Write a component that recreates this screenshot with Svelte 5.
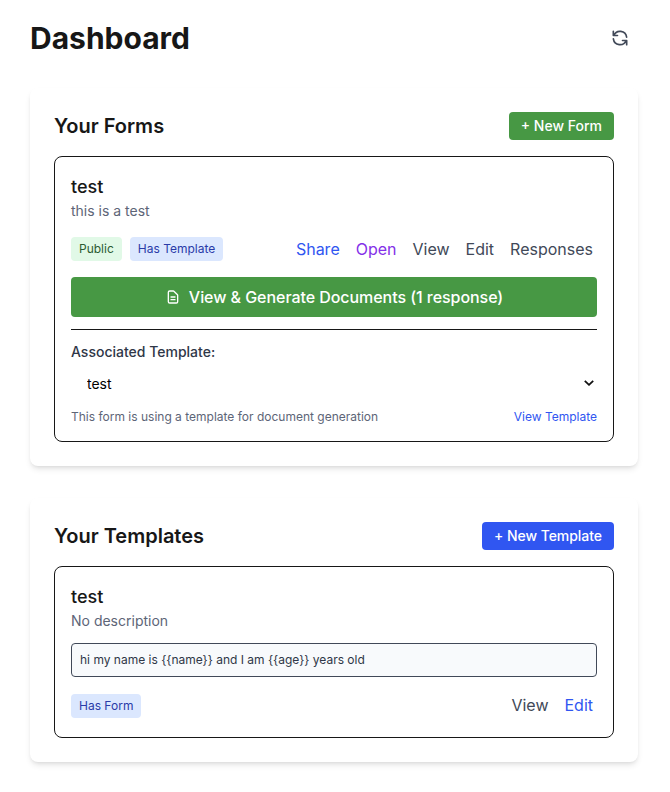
<script>
  const formActions = [
    { label: 'Share', tone: 'blue' },
    { label: 'Open', tone: 'purple' },
    { label: 'View', tone: 'gray' },
    { label: 'Edit', tone: 'gray' },
    { label: 'Responses', tone: 'gray' }
  ];
  const templateActions = [
    { label: 'View', tone: 'gray' },
    { label: 'Edit', tone: 'blue' }
  ];
  const preview = 'hi my name is {{name}} and I am {{age}} years old';
</script>

<main>
  <header>
    <h1>Dashboard</h1>
    <button class="refresh" aria-label="Refresh">
      <svg width="20" height="20" viewBox="0 0 24 24" fill="none" stroke="currentColor" stroke-width="2" stroke-linecap="round" stroke-linejoin="round">
        <path d="M4 4v5h.582m15.356 2A8.001 8.001 0 004.582 9m0 0H9m11 11v-5h-.581m0 0a8.003 8.003 0 01-15.357-2m15.357 2H15" />
      </svg>
    </button>
  </header>

  <section class="panel">
    <div class="panel-head">
      <h2>Your Forms</h2>
      <button class="new green">+ New Form</button>
    </div>
    <article>
      <h3>test</h3>
      <p class="desc">this is a test</p>
      <div class="row">
        <div class="badges">
          <span class="badge public">Public</span>
          <span class="badge linked">Has Template</span>
        </div>
        <div class="actions">
          {#each formActions as a}
            <button class={a.tone}>{a.label}</button>
          {/each}
        </div>
      </div>
      <button class="generate">
        <svg width="16" height="16" viewBox="0 0 24 24" fill="none" stroke="currentColor" stroke-width="2" stroke-linecap="round" stroke-linejoin="round">
          <path d="M9 12h6m-6 4h6m2 5H7a2 2 0 01-2-2V5a2 2 0 012-2h5.586a1 1 0 01.707.293l5.414 5.414a1 1 0 01.293.707V19a2 2 0 01-2 2z" />
        </svg>
        View &amp; Generate Documents (1 response)
      </button>
      <div class="association">
        <label for="template">Associated Template:</label>
        <div class="select">
          <select id="template"><option>test</option></select>
          <svg width="10" height="6" viewBox="0 0 10 6" fill="none" stroke="#111" stroke-width="1.8">
            <path d="M.8 .8L5 4.8L9.2 .8" />
          </svg>
        </div>
        <div class="hint">
          <span>This form is using a template for document generation</span>
          <button class="blue">View Template</button>
        </div>
      </div>
    </article>
  </section>

  <section class="panel">
    <div class="panel-head">
      <h2>Your Templates</h2>
      <button class="new solid-blue">+ New Template</button>
    </div>
    <article>
      <h3>test</h3>
      <p class="desc">No description</p>
      <div class="preview">{preview}</div>
      <div class="row">
        <div class="badges low"><span class="badge linked">Has Form</span></div>
        <div class="actions">
          {#each templateActions as a}
            <button class={a.tone}>{a.label}</button>
          {/each}
        </div>
      </div>
    </article>
  </section>
</main>

<style>
  :global(body) { background: #fff; }
  * { box-sizing: border-box; margin: 0; }
  main {
    padding: 20px 32px 30px 30px;
    font-family: Inter, sans-serif;
    font-size: 16px;
    line-height: 24px;
    color: #171717;
  }
  button, select { font: inherit; border: 0; background: none; padding: 0; }
  svg { display: block; flex: none; }
  header, .panel-head, .row, .hint { display: flex; align-items: center; justify-content: space-between; }
  header { height: 36px; margin-bottom: 32px; }
  h1 { font-size: 30px; line-height: 36px; font-weight: 700; }
  .refresh { padding: 8px; color: #414958; }
  .panel {
    padding: 24px;
    border-radius: 8px;
    background: #fff;
    box-shadow: 0 4px 6px -1px rgba(0, 0, 0, .1), 0 2px 4px -2px rgba(0, 0, 0, .1);
  }
  .panel + .panel { margin-top: 32px; }
  .panel-head { margin-bottom: 16px; }
  h2 { font-size: 20px; line-height: 28px; font-weight: 600; }
  .new { padding: 4px 12px; border-radius: 4px; color: #fff; font-size: 14px; line-height: 20px; font-weight: 500; }
  .green, .generate { background: #479844; }
  .solid-blue { background: #3056f1; letter-spacing: -.05px; }
  article { border: 1px solid #171717; border-radius: 8px; padding: 16px; }
  h3 { font-size: 18px; line-height: 28px; font-weight: 500; }
  .desc { font-size: 14px; line-height: 20px; color: #5d6577; }
  .row { margin-top: 12px; }
  .badges, .actions { display: flex; gap: 8px; }
  .low { padding-top: 2px; }
  .badge { padding: 4px 8px; border-radius: 4px; font-size: 12px; line-height: 16px; }
  .public { background: #e1f9e7; color: #2c5b32; }
  .linked { background: #dbe7fe; color: #2a3ba8; }
  .actions button { padding: 4px; }
  .blue { color: #3056f1; }
  .purple { color: #8430e8; }
  .gray { color: #414958; }
  .generate {
    display: flex;
    align-items: center;
    justify-content: center;
    gap: 8px;
    width: 100%;
    height: 40px;
    margin-top: 12px;
    border-radius: 4px;
    color: #fff;
    font-weight: 500;
    letter-spacing: -.055px;
  }
  .association { margin-top: 12px; padding-top: 12px; border-top: 1px solid #171717; }
  label { display: block; font-size: 14px; line-height: 20px; font-weight: 500; color: #2f3747; }
  .select { position: relative; margin: 4px 0 8px; height: 35px; }
  select { appearance: none; width: 100%; height: 35px; padding: 0 16px; font-size: 14px; color: #000; }
  .select svg { position: absolute; right: 3px; top: 14px; pointer-events: none; }
  .hint { font-size: 12px; line-height: 16px; color: #5d6577; }
  .preview {
    margin-top: 12px;
    padding: 8px;
    border: 1px solid #414958;
    border-radius: 4px;
    background: #f8fafc;
    font-size: 12px;
    line-height: 16px;
    color: #2f3747;
  }
</style>
